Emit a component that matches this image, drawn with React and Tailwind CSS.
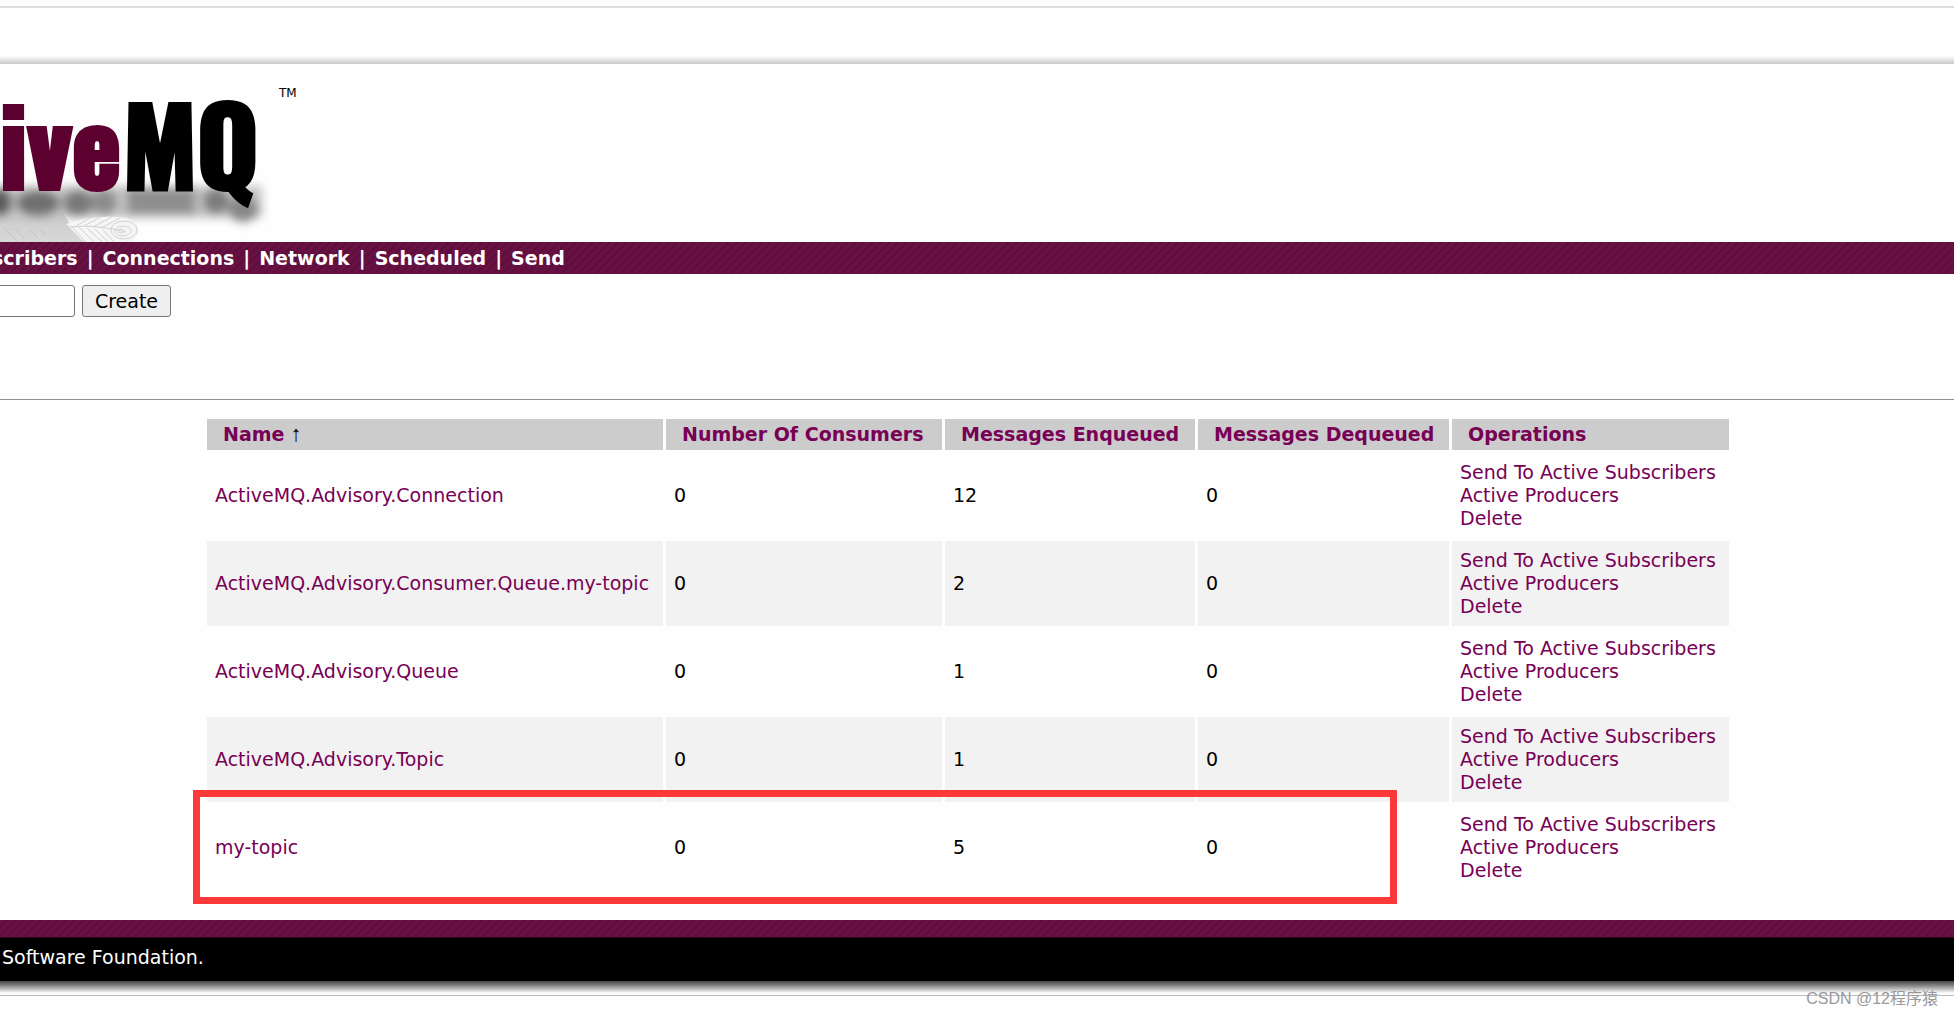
import React from 'react'

const navLinks = ['scribers', 'Connections', 'Network', 'Scheduled', 'Send']

const columns = [
  {label: 'Name', width: 'w-[456px]', sorted: true},
  {label: 'Number Of Consumers', width: 'w-[276px]'},
  {label: 'Messages Enqueued', width: 'w-[250px]'},
  {label: 'Messages Dequeued', width: 'w-[251px]'},
  {label: 'Operations', width: ''},
]

const topics = [
  {name: 'ActiveMQ.Advisory.Connection', consumers: 0, enqueued: 12, dequeued: 0},
  {name: 'ActiveMQ.Advisory.Consumer.Queue.my-topic', consumers: 0, enqueued: 2, dequeued: 0},
  {name: 'ActiveMQ.Advisory.Queue', consumers: 0, enqueued: 1, dequeued: 0},
  {name: 'ActiveMQ.Advisory.Topic', consumers: 0, enqueued: 1, dequeued: 0},
  {name: 'my-topic', consumers: 0, enqueued: 5, dequeued: 0},
]

const operations = ['Send To Active Subscribers', 'Active Producers', 'Delete']

const Logo = () => (
  <svg className="block h-[178px] w-[270px] font-['Oswald','Roboto_Condensed',sans-serif] font-bold" viewBox="0 0 270 178" role="img" aria-label="ActiveMQ">
    <defs>
      <filter id="soft" filterUnits="userSpaceOnUse" x="-30" y="90" width="320" height="88">
        <feGaussianBlur stdDeviation="5" />
      </filter>
      <linearGradient id="floor" x1="0" y1="0" x2="0" y2="1">
        <stop offset="0" stopColor="#c8c8c8" />
        <stop offset="1" stopColor="#d8d8d8" />
      </linearGradient>
    </defs>
    <path d="M0 142 H58 L68 157 L86 178 H0 Z" fill="url(#floor)" />
    <g filter="url(#soft)">
      <rect x="-20" y="122" width="282" height="32" fill="#c4c4c4" />
      <ellipse cx="0" cy="138" rx="12" ry="14" fill="#5c5c5c" />
      <ellipse cx="38" cy="139" rx="22" ry="13" fill="#707070" />
      <ellipse cx="78" cy="139" rx="15" ry="13" fill="#787878" />
      <ellipse cx="104" cy="138" rx="13" ry="13" fill="#8c8c8c" />
      <rect x="127" y="124" width="68" height="26" fill="#8e8e8e" />
      <ellipse cx="216" cy="137" rx="13" ry="13" fill="#7c7c7c" />
      <ellipse cx="243" cy="145" rx="15" ry="13" fill="#868686" />
    </g>
    {/* feather tip */}
    <path d="M66 160 Q96 150 126 154 Q142 160 138 170 L132 178 H84 Z" fill="#f6f5f6" />
    <g fill="none" stroke="#d5d0d3" strokeWidth="1">
      <path d="M68 163 Q96 160 126 168" />
      <path d="M76 162 L92 153 M84 162 L102 152 M93 163 L112 153 M101 164 L120 154" />
      <path d="M72 163 L86 178 M79 163 L94 178 M87 164 L102 178 M95 165 L108 178 M103 166 L114 178" />
      <ellipse cx="124" cy="166" rx="13" ry="9" />
      <ellipse cx="123" cy="167" rx="8" ry="5" />
      <ellipse cx="121" cy="167" rx="3" ry="2" />
    </g>
    <g stroke="#c4c4c4" strokeWidth="1">
      <path d="M4 164 L16 176 M14 164 L24 174 M30 166 L38 174 M40 166 L46 172" />
    </g>
    <text x="121" y="125" textAnchor="end" fontSize="105" fill="#5c0030" stroke="#5c0030" strokeWidth="4">Active</text>
    <text x="123" y="125" fontSize="105" fill="#000" stroke="#000" strokeWidth="4">MQ</text>
  </svg>
)

const App = () => {
  return (
    <div className="relative overflow-x-hidden bg-[#fefefe] pt-[6px] font-['DejaVu_Sans',sans-serif] text-[19px] leading-[23px] text-black">
      <div className="border-t-2 border-[#dddddd]"></div>
      <div className="mt-12 h-2 bg-linear-to-b from-[#fefefe] to-[#c8c8c8]"></div>

      <header className="flex h-[178px] items-start">
        <Logo />
        <span className="pt-[18px] pl-[9px] text-[12px]">TM</span>
      </header>

      <nav className="-ml-2 flex h-8 items-center gap-[9px] bg-[#661141] bg-[repeating-linear-gradient(135deg,transparent_0px,transparent_4px,#560a38_5px,transparent_6px)] font-bold text-white">
        {navLinks.map((link, i) => (
          <React.Fragment key={link}>
            {i > 0 && <span>|</span>}
            <a href="#">{link}</a>
          </React.Fragment>
        ))}
      </nav>

      <form className="-ml-[10px] flex gap-[7px] pt-[11px]" onSubmit={e => e.preventDefault()}>
        <input type="text" name="JMSDestination" aria-label="Topic Name"
          className="h-8 w-[85px] rounded-[3px] border border-[#767676] bg-white px-1" />
        <button type="submit" className="h-8 w-[89px] rounded-[3px] border border-[#767676] bg-[#efefef]">
          Create
        </button>
      </form>

      <hr className="mt-[82px] border-[#909090]" />

      <main className="relative mt-4 mr-[222px] ml-[204px]">
        <table className="w-full table-fixed border-separate border-spacing-[3px] text-left">
          <thead>
            <tr>
              {columns.map(col => (
                <th key={col.label} className={`${col.width} h-[31px] bg-[#cccccc] px-4 py-0 font-bold whitespace-nowrap text-[#780055]`}>
                  <a href="#">{col.label}</a>
                  {col.sorted && <span className="font-['Liberation_Sans',sans-serif] text-[22px] leading-none font-normal text-black"> ↑</span>}
                </th>
              ))}
            </tr>
          </thead>
          <tbody>
            {topics.map(topic => (
              <tr key={topic.name} className="even:bg-[#f2f2f2]">
                <td className="p-2 whitespace-nowrap"><a href="#" className="text-[#780055]">{topic.name}</a></td>
                <td className="p-2">{topic.consumers}</td>
                <td className="p-2">{topic.enqueued}</td>
                <td className="p-2">{topic.dequeued}</td>
                <td className="p-2 whitespace-nowrap">
                  {operations.map(op => (
                    <a key={op} href="#" className="block text-[#780055]">{op}</a>
                  ))}
                </td>
              </tr>
            ))}
          </tbody>
        </table>
        {/* marks the my-topic row */}
        <div className="pointer-events-none absolute right-[335px] -bottom-[11px] -left-[11px] h-[114px] border-[7px] border-[#fc3838]"></div>
      </main>

      <footer className="mt-[27px]">
        <div className="h-[18px] border-b border-[#2a0a1c] bg-[#661141] bg-[repeating-linear-gradient(135deg,transparent_0px,transparent_4px,#560a38_5px,transparent_6px)]"></div>
        <p className="h-[43px] bg-black pt-2 pl-[2px] text-white">Software Foundation.</p>
        <div className="h-3 bg-linear-to-b from-[#444444] to-[#fefefe]"></div>
        <div className="mt-[2px] border-t border-[#bbbbbb] pb-5"></div>
      </footer>

      <span className="absolute right-4 bottom-[6px] font-['Liberation_Sans','Noto_Sans_CJK_SC',sans-serif] text-[16px] text-[#999999]">
        CSDN @12程序猿
      </span>
    </div>
  )
}

export default App
